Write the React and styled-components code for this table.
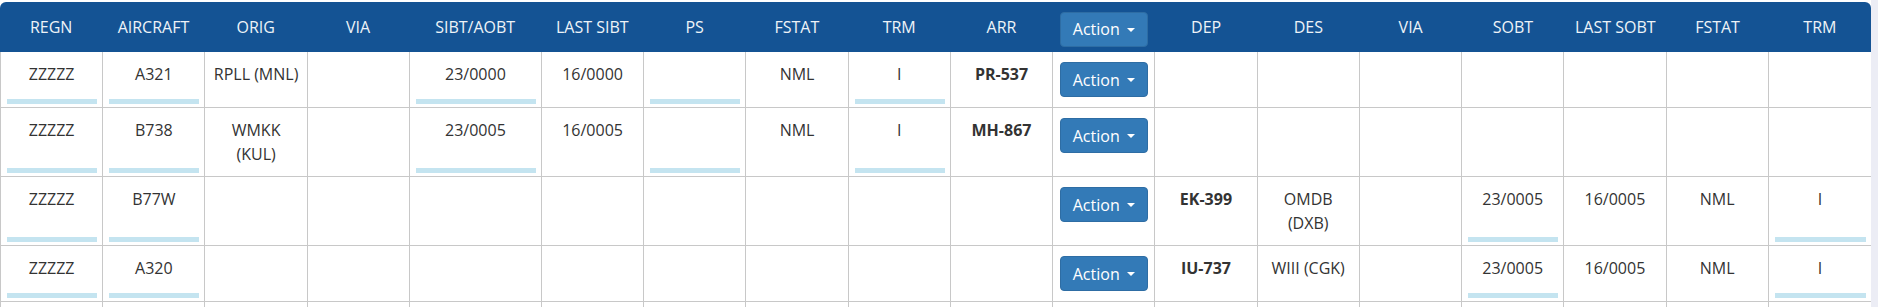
import React from 'react'
import styled, { createGlobalStyle } from 'styled-components'

const Global = createGlobalStyle`
  body {
    margin: 0;
    background: #fff;
    font-family: "Open Sans", "Noto Sans", sans-serif;
    color: #333;
  }
`

const COLS = 'repeat(4, 1fr) 132px repeat(13, 1fr)'

const Page = styled.div`
  display: flex;
  min-height: 307px;
`
const Gutter = styled.div`
  flex: 1;
  background: #ecedf5;
`
const Table = styled.div`
  width: 1871px;
  padding-top: 2px;
`
const Head = styled.div`
  display: grid;
  grid-template-columns: ${COLS};
  height: 50px;
  background: #145394;
  border-radius: 6px 6px 0 0;
  color: #eef3f8;
  font-size: 16px;
`
const Th = styled.div`
  display: flex;
  align-items: center;
  justify-content: center;
  padding-top: ${p => (p.$button ? '4px' : '0')};
`
const Row = styled.div`
  display: grid;
  grid-template-columns: ${COLS};
  min-height: ${p => p.$minHeight || 0}px;
  border-left: 1px solid #c8c8c8;
  font-size: 16px;
  line-height: 24px;
`
const Cell = styled.div`
  display: flex;
  flex-direction: column;
  align-items: ${p => (p.$button ? 'center' : 'stretch')};
  padding: 10px 7px 10px;
  text-align: center;
  font-weight: ${p => (p.$bold ? 700 : 400)};
  border-right: ${p => (p.$last ? 'none' : '1px solid #c8c8c8')};
  border-bottom: 1px solid #c8c8c8;
  min-width: 0;
`
const Bar = styled.div`
  margin: auto -2px -7px -1px;
  height: 5px;
  background: #c4e4f0;
`
const Button = styled.button`
  display: inline-flex;
  align-items: center;
  gap: 7px;
  height: 35px;
  padding: 0 12px;
  border: 1px solid #2e6da4;
  border-radius: 4px;
  background: #337ab7;
  color: #fff;
  font-family: inherit;
  font-size: 16px;
`
const Caret = styled.span`
  width: 0;
  height: 0;
  border-left: 4px solid transparent;
  border-right: 4px solid transparent;
  border-top: 4px solid #fff;
  margin-top: 1px;
`

const heads = ['REGN', 'AIRCRAFT', 'ORIG', 'VIA', 'SIBT/AOBT', 'LAST SIBT', 'PS', 'FSTAT', 'TRM', 'ARR', null, 'DEP', 'DES', 'VIA', 'SOBT', 'LAST SOBT', 'FSTAT', 'TRM']

const arrival = (regn, ac, orig, sibt, last, flt) => ({
  cells: [regn, ac, orig, '', sibt, last, '', 'NML', 'I', flt, null, '', '', '', '', '', '', ''],
  bars: [0, 1, 4, 6, 8],
  bold: [9]
})
const departure = (regn, ac, flt, des, sobt, last) => ({
  cells: [regn, ac, '', '', '', '', '', '', '', '', null, flt, des, '', sobt, last, 'NML', 'I'],
  bars: [0, 1, 14, 17],
  bold: [11]
})

const rows = [
  arrival('ZZZZZ', 'A321', 'RPLL (MNL)', '23/0000', '16/0000', 'PR-537'),
  arrival('ZZZZZ', 'B738', 'WMKK (KUL)', '23/0005', '16/0005', 'MH-867'),
  departure('ZZZZZ', 'B77W', 'EK-399', 'OMDB (DXB)', '23/0005', '16/0005'),
  departure('ZZZZZ', 'A320', 'IU-737', 'WIII (CGK)', '23/0005', '16/0005')
]

const ActionButton = () => (
  <Button type="button">Action<Caret /></Button>
)

export default function App() {
  return (
    <Page>
      <Global />
      <Table>
        <Head>
          {heads.map((h, i) =>
            h === null
              ? <Th key={i} $button><ActionButton /></Th>
              : <Th key={i}>{h}</Th>
          )}
        </Head>
        {rows.map((r, ri) => (
          <Row key={ri}>
            {r.cells.map((c, i) =>
              c === null
                ? <Cell key={i} $button><ActionButton /></Cell>
                : (
                  <Cell key={i} $bold={r.bold.includes(i)} $last={i === 17}>
                    {c}
                    {r.bars.includes(i) && <Bar />}
                  </Cell>
                )
            )}
          </Row>
        ))}
        {/* next row, only its top edge is in view */}
        <Row $minHeight={56}>
          {heads.map((h, i) => <Cell key={i} $last={i === 17} />)}
        </Row>
      </Table>
      <Gutter />
    </Page>
  )
}
